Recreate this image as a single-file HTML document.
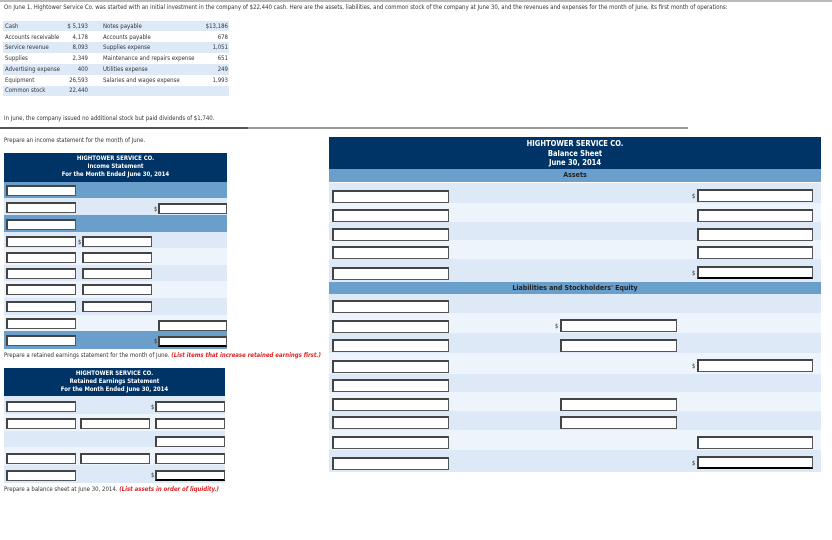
<!DOCTYPE html>
<html><head><meta charset="utf-8"><style>
*{margin:0;padding:0;box-sizing:border-box}
body{width:832px;height:540px;background:#fff;position:relative;overflow:hidden;font-family:"DejaVu Sans Condensed","Liberation Sans",sans-serif;font-size:6px;color:#222}
.a{position:absolute}
.t{position:absolute;white-space:nowrap;font-size:6px;color:#333}
.in{position:absolute;background:#fff;border:1px solid #555;border-top:2px solid #444;border-left:2px solid #444}
.hd{position:absolute;background:#003366;color:#fff;font-weight:bold;text-align:center;font-size:6px;line-height:8px}
.dk{background:#6a9fcc}.lt{background:#dde9f7}.vl{background:#eef4fc}
.d{position:absolute;font-size:6px;color:#333}
.red{color:#e02020;font-weight:bold;font-style:italic}
</style></head><body>
<div class="a" style="left:0;top:0;width:832px;height:2px;background:#bbb"></div>
<div class="t" style="left:4px;top:4px">On June 1, Hightower Service Co. was started with an initial investment in the company of $22,440 cash. Here are the assets, liabilities, and common stock of the company at June 30, and the revenues and expenses for the month of June, its first month of operations:</div>

<div class="a lt" style="left:3px;top:21px;width:226px;height:10px"></div>
<div class="a lt" style="left:3px;top:42px;width:226px;height:11px"></div>
<div class="a lt" style="left:3px;top:64px;width:226px;height:11px"></div>
<div class="a lt" style="left:3px;top:86px;width:226px;height:10px"></div>
<div class="t" style="left:5px;top:22px;line-height:10.7px">Cash<br>Accounts receivable<br>Service revenue<br>Supplies<br>Advertising expense<br>Equipment<br>Common stock</div>
<div class="t" style="left:60px;top:22px;line-height:10.7px;text-align:right;width:28px">$ 5,193<br>4,178<br>8,093<br>2,349<br>400<br>26,593<br>22,440</div>
<div class="t" style="left:103px;top:22px;line-height:10.7px">Notes payable<br>Accounts payable<br>Supplies expense<br>Maintenance and repairs expense<br>Utilities expense<br>Salaries and wages expense</div>
<div class="t" style="left:196px;top:22px;line-height:10.7px;text-align:right;width:32px">$13,186<br>678<br>1,051<br>651<br>249<br>1,993</div>
<div class="t" style="left:4px;top:115px">In June, the company issued no additional stock but paid dividends of $1,740.</div>
<div class="a" style="left:0;top:127px;width:248px;height:2px;background:#555"></div>
<div class="a" style="left:248px;top:127px;width:440px;height:2px;background:#999"></div>

<div class="t" style="left:4px;top:137px">Prepare an income statement for the month of June.</div>
<div class="hd" style="left:4px;top:153px;width:223px;height:29px;padding-top:2px">HIGHTOWER SERVICE CO.<br>Income Statement<br>For the Month Ended June 30, 2014</div>
<div class="a dk" style="left:4px;top:182px;width:223px;height:16px"></div>
<div class="a lt" style="left:4px;top:198px;width:223px;height:17px"></div>
<div class="a dk" style="left:4px;top:215px;width:223px;height:17px"></div>
<div class="a lt" style="left:4px;top:232px;width:223px;height:16px"></div>
<div class="a vl" style="left:4px;top:248px;width:223px;height:17px"></div>
<div class="a lt" style="left:4px;top:265px;width:223px;height:16px"></div>
<div class="a vl" style="left:4px;top:281px;width:223px;height:17px"></div>
<div class="a lt" style="left:4px;top:298px;width:223px;height:17px"></div>
<div class="a vl" style="left:4px;top:315px;width:223px;height:16px"></div>
<div class="a dk" style="left:4px;top:331px;width:223px;height:18px"></div>
<div class="in" style="left:6px;top:185px;width:70px;height:11px"></div>
<div class="in" style="left:6px;top:202px;width:70px;height:11px"></div>
<div class="in" style="left:6px;top:219px;width:70px;height:11px"></div>
<div class="in" style="left:6px;top:236px;width:70px;height:11px"></div>
<div class="in" style="left:6px;top:252px;width:70px;height:11px"></div>
<div class="in" style="left:6px;top:268px;width:70px;height:11px"></div>
<div class="in" style="left:6px;top:284px;width:70px;height:11px"></div>
<div class="in" style="left:6px;top:301px;width:70px;height:11px"></div>
<div class="in" style="left:6px;top:318px;width:70px;height:11px"></div>
<div class="in" style="left:6px;top:335px;width:70px;height:11px"></div>
<div class="in" style="left:82px;top:236px;width:70px;height:11px"></div><div class="d" style="left:78px;top:239px">$</div>
<div class="in" style="left:82px;top:252px;width:70px;height:11px"></div>
<div class="in" style="left:82px;top:268px;width:70px;height:11px"></div>
<div class="in" style="left:82px;top:284px;width:70px;height:11px"></div>
<div class="in" style="left:82px;top:301px;width:70px;height:11px"></div>
<div class="in" style="left:158px;top:203px;width:69px;height:11px"></div><div class="d" style="left:154px;top:206px">$</div>
<div class="in" style="left:158px;top:320px;width:69px;height:11px"></div>
<div class="in" style="left:158px;top:336px;width:69px;height:11px;border-bottom:2px solid #000"></div><div class="d" style="left:154px;top:338px">$</div>
<div class="t" style="left:4px;top:352px">Prepare a retained earnings statement for the month of June. <span class="red">(List items that increase retained earnings first.)</span></div>

<div class="hd" style="left:4px;top:368px;width:221px;height:28px;padding-top:2px">HIGHTOWER SERVICE CO.<br>Retained Earnings Statement<br>For the Month Ended June 30, 2014</div>
<div class="a lt" style="left:4px;top:396px;width:221px;height:18px"></div>
<div class="a vl" style="left:4px;top:414px;width:221px;height:17px"></div>
<div class="a lt" style="left:4px;top:431px;width:221px;height:16px"></div>
<div class="a vl" style="left:4px;top:447px;width:221px;height:18px"></div>
<div class="a lt" style="left:4px;top:465px;width:221px;height:18px"></div>
<div class="in" style="left:6px;top:401px;width:70px;height:11px"></div>
<div class="in" style="left:6px;top:418px;width:70px;height:11px"></div>
<div class="in" style="left:6px;top:453px;width:70px;height:11px"></div>
<div class="in" style="left:6px;top:470px;width:70px;height:11px"></div>
<div class="in" style="left:80px;top:418px;width:70px;height:11px"></div>
<div class="in" style="left:80px;top:453px;width:70px;height:11px"></div>
<div class="in" style="left:155px;top:401px;width:70px;height:11px"></div><div class="d" style="left:151px;top:404px">$</div>
<div class="in" style="left:155px;top:418px;width:70px;height:11px"></div>
<div class="in" style="left:155px;top:436px;width:70px;height:11px"></div>
<div class="in" style="left:155px;top:453px;width:70px;height:11px"></div>
<div class="in" style="left:155px;top:470px;width:70px;height:11px;border-bottom:2px solid #000"></div><div class="d" style="left:151px;top:472px">$</div>
<div class="t" style="left:4px;top:486px">Prepare a balance sheet at June 30, 2014. <span class="red">(List assets in order of liquidity.)</span></div>

<div class="hd" style="left:329px;top:137px;width:492px;height:32px;padding-top:2px;font-size:7.5px;line-height:9.5px">HIGHTOWER SERVICE CO.<br>Balance Sheet<br>June 30, 2014</div>
<div class="a dk" style="left:329px;top:169px;width:492px;height:13px;color:#222;font-weight:bold;text-align:center;font-size:7px;line-height:13px">Assets</div>
<div class="a lt" style="left:329px;top:183px;width:492px;height:20px"></div>
<div class="a vl" style="left:329px;top:203px;width:492px;height:19px"></div>
<div class="a lt" style="left:329px;top:222px;width:492px;height:18px"></div>
<div class="a vl" style="left:329px;top:240px;width:492px;height:19px"></div>
<div class="a lt" style="left:329px;top:259px;width:492px;height:23px"></div>
<div class="a dk" style="left:329px;top:282px;width:492px;height:12px;color:#222;font-weight:bold;text-align:center;font-size:7px;line-height:12px">Liabilities and Stockholders' Equity</div>
<div class="a lt" style="left:329px;top:294px;width:492px;height:19px"></div>
<div class="a vl" style="left:329px;top:313px;width:492px;height:20px"></div>
<div class="a lt" style="left:329px;top:333px;width:492px;height:20px"></div>
<div class="a vl" style="left:329px;top:353px;width:492px;height:21px"></div>
<div class="a lt" style="left:329px;top:374px;width:492px;height:18px"></div>
<div class="a vl" style="left:329px;top:392px;width:492px;height:19px"></div>
<div class="a lt" style="left:329px;top:411px;width:492px;height:19px"></div>
<div class="a vl" style="left:329px;top:430px;width:492px;height:20px"></div>
<div class="a lt" style="left:329px;top:450px;width:492px;height:22px"></div>
<div class="in" style="left:332px;top:190px;width:117px;height:13px"></div>
<div class="in" style="left:332px;top:209px;width:117px;height:13px"></div>
<div class="in" style="left:332px;top:228px;width:117px;height:13px"></div>
<div class="in" style="left:332px;top:246px;width:117px;height:13px"></div>
<div class="in" style="left:332px;top:267px;width:117px;height:13px"></div>
<div class="in" style="left:332px;top:300px;width:117px;height:13px"></div>
<div class="in" style="left:332px;top:320px;width:117px;height:13px"></div>
<div class="in" style="left:332px;top:339px;width:117px;height:13px"></div>
<div class="in" style="left:332px;top:360px;width:117px;height:13px"></div>
<div class="in" style="left:332px;top:379px;width:117px;height:13px"></div>
<div class="in" style="left:332px;top:398px;width:117px;height:13px"></div>
<div class="in" style="left:332px;top:416px;width:117px;height:13px"></div>
<div class="in" style="left:332px;top:436px;width:117px;height:13px"></div>
<div class="in" style="left:332px;top:457px;width:117px;height:13px"></div>
<div class="in" style="left:560px;top:319px;width:117px;height:13px"></div><div class="d" style="left:555px;top:323px">$</div>
<div class="in" style="left:560px;top:339px;width:117px;height:13px"></div>
<div class="in" style="left:560px;top:398px;width:117px;height:13px"></div>
<div class="in" style="left:560px;top:416px;width:117px;height:13px"></div>
<div class="in" style="left:697px;top:189px;width:116px;height:13px"></div><div class="d" style="left:692px;top:193px">$</div>
<div class="in" style="left:697px;top:209px;width:116px;height:13px"></div>
<div class="in" style="left:697px;top:228px;width:116px;height:13px"></div>
<div class="in" style="left:697px;top:246px;width:116px;height:13px"></div>
<div class="in" style="left:697px;top:266px;width:116px;height:13px;border-bottom:2px solid #000"></div><div class="d" style="left:692px;top:270px">$</div>
<div class="in" style="left:697px;top:359px;width:116px;height:13px"></div><div class="d" style="left:692px;top:363px">$</div>
<div class="in" style="left:697px;top:436px;width:116px;height:13px"></div>
<div class="in" style="left:697px;top:456px;width:116px;height:13px;border-bottom:2px solid #000"></div><div class="d" style="left:692px;top:460px">$</div>
</body></html>
